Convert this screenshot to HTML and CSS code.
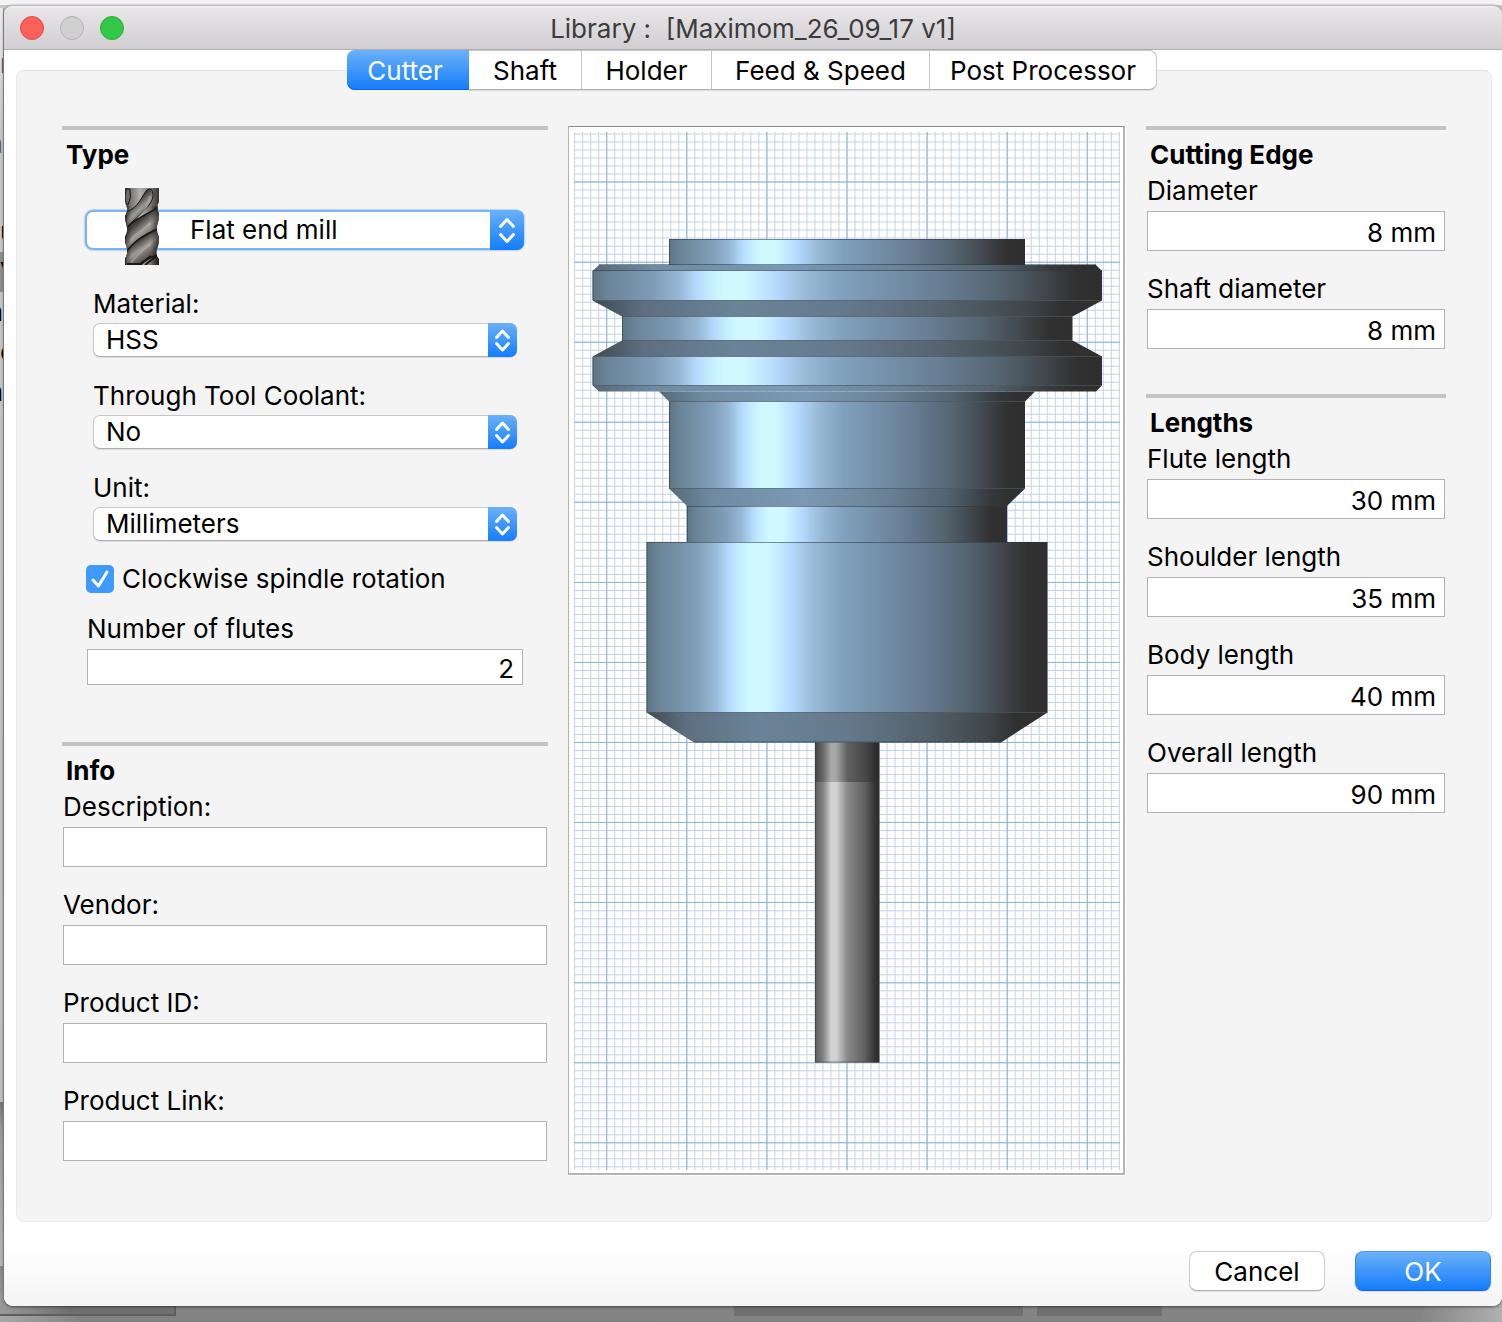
FILE: index.html
```html
<!DOCTYPE html>
<html lang="en">
<head>
<meta charset="utf-8">
<title>Library : [Maximom_26_09_17 v1]</title>
<link rel="stylesheet" href="styles.css">
</head>
<body>
<div class="backdrop" aria-hidden="true">
  <div class="strip">
    <span class="glyph steel g1">r</span>
    <span class="glyph gray tail g2">a</span>
    <span class="glyph g3">u</span>
    <span class="glyph picked g4">V</span>
    <span class="glyph tail g5">n</span>
    <span class="glyph g6">c</span>
    <span class="glyph tail g7">a</span>
  </div>
  <div class="ledge"><i class="slab slab-a"></i><i class="slab slab-b"></i><i class="slab slab-c"></i></div>
</div>

<main class="window">
  <header class="titlebar">
    <div class="lights">
      <button class="light red" type="button" aria-label="Close"></button>
      <button class="light off" type="button" aria-label="Minimize" disabled></button>
      <button class="light green" type="button" aria-label="Zoom"></button>
    </div>
    <h1 class="title">Library :&nbsp; [Maximom_26_09_17 v1]</h1>
  </header>

  <nav class="tabs">
    <button class="tab active" type="button">Cutter</button>
    <button class="tab" type="button">Shaft</button>
    <button class="tab" type="button">Holder</button>
    <button class="tab" type="button">Feed &amp; Speed</button>
    <button class="tab" type="button">Post Processor</button>
  </nav>

  <form class="form">
    <div class="panel">
      <div class="column">
        <section class="section type">
          <h2 class="heading">Type</h2>
          <div class="picker">
            <select class="select" id="tool" aria-label="Tool type"><option>Flat end mill</option></select>
            <svg class="mill" width="34" height="77" viewBox="0 0 34 77" aria-hidden="true">
              <defs>
                <linearGradient id="m" x1="0" x2="1"><stop offset="0" stop-color="#3c3a38"/><stop offset=".12" stop-color="#6e6a68"/><stop offset=".45" stop-color="#b4b0ac"/><stop offset=".75" stop-color="#7b7775"/><stop offset="1" stop-color="#37332f"/></linearGradient>
                <linearGradient id="f" x1=".2" x2=".7" y1=".1" y2=".9"><stop offset="0" stop-color="#4b4a48"/><stop offset=".3" stop-color="#3f3e3c"/><stop offset=".55" stop-color="#a09c97"/><stop offset=".75" stop-color="#6a6764"/><stop offset="1" stop-color="#343230"/></linearGradient>
                <linearGradient id="edge" x1="0" x2="1"><stop offset="0" stop-color="#141413" stop-opacity=".6"/><stop offset=".2" stop-color="#141413" stop-opacity="0"/><stop offset=".75" stop-color="#141413" stop-opacity="0"/><stop offset="1" stop-color="#141413" stop-opacity=".7"/></linearGradient>
                <clipPath id="c"><path d="M0 0H34V14Q31 19 34 26Q34 32 32 38Q31 43 34 49Q34 56 32 61Q30 67 34 71V77H0V71Q3 65 2 61Q0 55 0 49Q3 43 2 39Q0 33 0 28Q3 23 2 20Q0 16 0 12Z"/></clipPath>
              </defs>
              <g clip-path="url(#c)">
                <path fill="url(#m)" d="M0 0H34V77H0Z"/>
                <path fill="url(#f)" stroke="#191918" d="M1 24C14 20 17 7 22 2Q28-1 28 7C28 18 12 28 1 40Z"/>
                <path fill="url(#f)" stroke="#191918" stroke-width="1.500" d="M0 42C8 31 22 27 35 18V40C20 46 8 53 0 66Z"/>
                <path fill="url(#f)" stroke="#191918" stroke-width="1.500" d="M0 66C8 53 20 47 35 40V66C25 69 18 74 14 79H0Z"/>
                <path fill="none" stroke="#bdb9b4" stroke-width="1.500" d="M5 53C10 45 18 43 25 35M6 75C11 67 18 62 26 56M14 29C19 24 24 18 25 8" opacity=".5"/>
                <path fill="#6a6866" stroke="#1d1d1c" d="M1 1H5Q7 10 3 17Q0 15 0 9Z"/>
                <path fill="none" stroke="#1b1a1a" stroke-width="2" d="M2 76H15L26 68M20 77L34 66"/>
                <path fill="url(#edge)" d="M0 18H34V77H0Z"/>
              </g>
            </svg>
            <svg class="knob" viewBox="0 0 34 40" aria-hidden="true"><path d="M10.500 16.500L17 9.500L23.500 16.500M10.500 24.500L17 31.500L23.500 24.500"/></svg>
          </div>

          <div class="choices">
            <div class="choice">
              <label class="label" for="material">Material:</label>
              <div class="drop"><select class="select" id="material"><option>HSS</option></select><svg class="knob" viewBox="0 0 29 34" aria-hidden="true"><path d="M8.500 14.500L14.500 8L20.500 14.500M8.500 20.500L14.500 27L20.500 20.500"/></svg></div>
            </div>
            <div class="choice">
              <label class="label" for="coolant">Through Tool Coolant:</label>
              <div class="drop"><select class="select" id="coolant"><option>No</option></select><svg class="knob" viewBox="0 0 29 34" aria-hidden="true"><path d="M8.500 14.500L14.500 8L20.500 14.500M8.500 20.500L14.500 27L20.500 20.500"/></svg></div>
            </div>
            <div class="choice">
              <label class="label" for="unit">Unit:</label>
              <div class="drop"><select class="select" id="unit"><option>Millimeters</option></select><svg class="knob" viewBox="0 0 29 34" aria-hidden="true"><path d="M8.500 14.500L14.500 8L20.500 14.500M8.500 20.500L14.500 27L20.500 20.500"/></svg></div>
            </div>
          </div>

          <div class="flutes">
            <label class="check"><input class="box" type="checkbox" checked><svg class="tick" viewBox="0 0 28 28" aria-hidden="true"><path d="M7 15L12.500 21L21 7"/></svg><span>Clockwise spindle rotation</span></label>
            <label class="label" for="flutes">Number of flutes</label>
            <input class="input short" id="flutes" type="text" value="2">
          </div>
        </section>

        <section class="section">
          <h2 class="heading">Info</h2>
          <div class="fields">
            <div class="field"><label class="label" for="description">Description:</label><input class="input" id="description" type="text"></div>
            <div class="field"><label class="label" for="vendor">Vendor:</label><input class="input" id="vendor" type="text"></div>
            <div class="field"><label class="label" for="pid">Product ID:</label><input class="input" id="pid" type="text"></div>
            <div class="field"><label class="label" for="link">Product Link:</label><input class="input" id="link" type="text"></div>
          </div>
        </section>
      </div>

      <figure class="preview">
        <svg class="drawing" viewBox="574 132 546 1038" role="img" aria-label="Tool and holder profile">
          <defs>
            <linearGradient id="steel" x1="0" x2="1">
              <stop offset="0" stop-color="#5e7484"/><stop offset=".03" stop-color="#6b8498"/><stop offset=".12" stop-color="#7e9db7"/><stop offset=".17" stop-color="#97b8d6"/><stop offset=".205" stop-color="#b5daff"/><stop offset=".235" stop-color="#c6effe"/><stop offset=".26" stop-color="#d0f9ff"/><stop offset=".3" stop-color="#cff8ff"/><stop offset=".33" stop-color="#c3e9ff"/><stop offset=".36" stop-color="#b5daff"/><stop offset=".42" stop-color="#98b9d6"/><stop offset=".49" stop-color="#80a1bd"/><stop offset=".56" stop-color="#7794ad"/><stop offset=".68" stop-color="#687e95"/><stop offset=".8" stop-color="#546470"/><stop offset=".88" stop-color="#43494f"/><stop offset=".95" stop-color="#303030"/><stop offset="1" stop-color="#2f2f2f"/>
            </linearGradient>
            <linearGradient id="under" x1="0" x2="1">
              <stop offset="0" stop-color="#404a52"/><stop offset=".1" stop-color="#5d6f80"/><stop offset=".28" stop-color="#6b8398"/><stop offset=".5" stop-color="#65798c"/><stop offset=".7" stop-color="#53616b"/><stop offset=".85" stop-color="#40464a"/><stop offset=".92" stop-color="#303030"/><stop offset="1" stop-color="#2f2f2f"/>
            </linearGradient>
            <linearGradient id="bevel" x1="0" x2="1">
              <stop offset="0" stop-color="#566877"/><stop offset=".12" stop-color="#6f8ba2"/><stop offset=".38" stop-color="#7a99b3"/><stop offset=".6" stop-color="#6b8398"/><stop offset=".78" stop-color="#536370"/><stop offset=".9" stop-color="#363a3d"/><stop offset=".95" stop-color="#303030"/><stop offset="1" stop-color="#2f2f2f"/>
            </linearGradient>
            <linearGradient id="shank" x1="0" x2="1">
              <stop offset="0" stop-color="#5c5c5c"/><stop offset=".13" stop-color="#858585"/><stop offset=".25" stop-color="#d2d2d2"/><stop offset=".33" stop-color="#d2d2d2"/><stop offset=".5" stop-color="#8a8a8a"/><stop offset=".78" stop-color="#5e5e5e"/><stop offset=".93" stop-color="#323232"/><stop offset="1" stop-color="#2c2c2c"/>
            </linearGradient>
            <linearGradient id="shade" x1="0" x2="1">
              <stop offset="0" stop-color="#444"/><stop offset=".13" stop-color="#6a6a6a"/><stop offset=".25" stop-color="#a8a8a8"/><stop offset=".32" stop-color="#a8a8a8"/><stop offset=".5" stop-color="#616161"/><stop offset=".8" stop-color="#444"/><stop offset=".93" stop-color="#303030"/><stop offset="1" stop-color="#2b2b2b"/>
            </linearGradient>
          </defs>
          <g class="grid">
            <path class="minor" stroke-width="1038" stroke-dasharray="1 7.010" d="M566.150 651H1120"/>
            <path class="minor" stroke-width="546" stroke-dasharray="1 7.006" d="M847 125.540V1170"/>
            <path class="major" stroke-width="1038" stroke-dasharray="1 79.100" d="M526.100 651H1120"/>
            <path class="major" stroke-width="546" stroke-dasharray="1 79.060" d="M847 101.520V1170"/>
          </g>
          <path fill="url(#shade)" d="M815 742H879.500V782H815Z"/>
          <path fill="url(#shank)" d="M815 782H879.500V1062.500H815Z"/>
          <path fill="url(#steel)" d="M669 239H1025V265H669Z"/>
          <path fill="url(#bevel)" d="M599 265H1096L1102 271H592.500Z"/>
          <path fill="url(#steel)" d="M592.500 270.500H1102V300.500H592.500Z"/>
          <path fill="url(#under)" d="M592.500 300.500H1102L1072.500 316.500H622Z"/>
          <path fill="url(#steel)" d="M622 316.500H1072.500V340.500H622Z"/>
          <path fill="url(#under)" d="M622 340.500H1072.500L1102 356.500H592.500Z"/>
          <path fill="url(#steel)" d="M592.500 356.500H1102V385.500H592.500Z"/>
          <path fill="url(#bevel)" d="M592.500 385.500H1102L1096 391.500H599Z"/>
          <path fill="url(#bevel)" d="M659 391.500H1035L1025 401.500H669Z"/>
          <path fill="url(#steel)" d="M669 401.500H1025V488.500H669Z"/>
          <path fill="url(#bevel)" d="M669 488.500H1025L1007 506H687Z"/>
          <path fill="url(#steel)" d="M687 506H1007V542H687Z"/>
          <path fill="url(#steel)" d="M646.500 542H1047.500V712.500H646.500Z"/>
          <path fill="url(#under)" d="M646.500 712.500H1047.500L1001 742.500H694Z"/>
          <path class="seam" d="M669 239.500H1025M599 264.500H1096M593 270.500H1102M593 300.500H1102M622 316.500H1072M622 340.500H1072M593 356.500H1102M593 385.500H1102M669 401.500H1025M669 488.500H1025M687 506.500H1007M646.500 542.500H1047.500M646.500 712.500H1047.500M694 742H1001M815 1062H879M669.500 239V265M593 271V300M622.500 317V340M593 357V385M669.500 402V488M687.500 506V542M647 543V712M815.500 742V1062"/>
        </svg>
      </figure>

      <div class="column side">
        <section class="section">
          <h2 class="heading">Cutting Edge</h2>
          <div class="fields">
            <div class="field"><label class="label" for="dia">Diameter</label><input class="input" id="dia" type="text" value="8 mm"></div>
            <div class="field"><label class="label" for="sdia">Shaft diameter</label><input class="input" id="sdia" type="text" value="8 mm"></div>
          </div>
        </section>
        <section class="section">
          <h2 class="heading">Lengths</h2>
          <div class="fields">
            <div class="field"><label class="label" for="fl">Flute length</label><input class="input" id="fl" type="text" value="30 mm"></div>
            <div class="field"><label class="label" for="sl">Shoulder length</label><input class="input" id="sl" type="text" value="35 mm"></div>
            <div class="field"><label class="label" for="bl">Body length</label><input class="input" id="bl" type="text" value="40 mm"></div>
            <div class="field"><label class="label" for="ol">Overall length</label><input class="input" id="ol" type="text" value="90 mm"></div>
          </div>
        </section>
      </div>
    </div>

    <footer class="actions">
      <button class="button" type="button">Cancel</button>
      <button class="button primary" type="submit">OK</button>
    </footer>
  </form>
</main>
</body>
</html>
```
FILE: styles.css
```css
* { box-sizing: border-box; }

body {
  position: relative;
  min-height: 100vh;
  margin: 0;
  padding: 5px 0 16px 4px;
  background: linear-gradient(#f3f3f3 5px, #c8c8c8 5px, #c0c0c0);
  color: #000;
  font: 26px/30px Inter, "Liberation Sans", sans-serif;
  overflow-x: hidden;
}

button, input, select { font: inherit; color: inherit; margin: 0; }

/* Application window behind the dialog */
.backdrop { position: absolute; inset: 0; overflow: hidden; }
.strip {
  position: absolute;
  left: 0; top: 8px; bottom: 0;
  width: 4px;
  overflow: hidden;
  border-right: 1px solid #999;
  background: linear-gradient(#ececec, #c6c6c6 120px, #bdbdbd 1094px, #777 1094px, #999 1120px, #b5b5b5 1258px, #888 1258px, #a0a0a0);
}
.glyph { position: absolute; left: 0; line-height: 40px; }
.tail { left: auto; right: 0; }
.steel { color: #4c5870; }
.gray { color: #666; }
.picked { background: #8e8e8e; }
.g1 { top: 36px; }
.g2 { top: 116px; }
.g3 { top: 204px; }
.g4 { top: 244px; }
.g5 { top: 284px; }
.g6 { top: 324px; }
.g7 { top: 364px; }
.ledge {
  position: absolute;
  left: 0; right: 0; bottom: 0;
  height: 30px;
  background: linear-gradient(90deg, #a8a8a8, #838383 80px, #848484 1420px, #b0b0b0);
}
.slab { position: absolute; bottom: 6px; height: 24px; background: #707070; }
.slab-a { left: 0; width: 176px; border: solid #5e5e5e; border-width: 0 2px 2px 0; background: linear-gradient(90deg, #999, #707070 70px); }
.slab-b { left: 734px; width: 289px; }
.slab-c { left: 1037px; width: 125px; }

/* Dialog */
.window {
  position: relative;
  border-radius: 9px;
  background: #fff;
  box-shadow: 0 0 1px #555, 0 1px 3px rgba(0, 0, 0, .5);
}
.titlebar {
  position: relative;
  display: flex;
  align-items: center;
  justify-content: center;
  height: 45px;
  border-top: 1px solid #bdbdbd;
  border-bottom: 1px solid #aeacae;
  border-radius: 9px 9px 0 0;
  background: linear-gradient(#f4f3f4, #e8e6e9 2px, #d0ced1);
}
.lights { position: absolute; left: 16px; top: 10px; display: flex; gap: 16px; }
.light { width: 24px; height: 24px; padding: 0; border: 1px solid; border-radius: 50%; }
.red { background: #fc605b; border-color: #e04a46; }
.off { background: #d0d0d0; border-color: #b4b3b4; }
.green { background: #34c84a; border-color: #2aac3c; }
.title { margin: 0; padding-top: 2px; color: #3c3c3c; font-size: 26px; font-weight: 400; line-height: 30px; }

.tabs {
  position: relative;
  display: grid;
  grid-template-columns: 122px 113px 130px 218px 227px;
  justify-content: center;
  height: 40px;
  margin: 0 2px -20px 0;
}
.tab {
  padding: 2px 0 0;
  border: solid #c8c8c8;
  border-width: 1px 1px 1px 0;
  border-bottom-color: #b2b2b2;
  background: #fff;
  white-space: nowrap;
  box-shadow: 0 1px 1px rgba(0, 0, 0, .1);
}
.tab:last-child { border-radius: 0 8px 8px 0; }
.active {
  padding-right: 6px;
  border: 0;
  border-radius: 8px 0 0 8px;
  background: linear-gradient(#6bb1f8, #147dfc);
  box-shadow: inset 0 -1px #0d63ef;
  color: #fff;
}

.form { padding: 0 10px 15px 12px; border-radius: 0 0 9px 9px; background: linear-gradient(#fff calc(100% - 60px), #f4f4f4); }
.panel {
  display: grid;
  grid-template-columns: 486px minmax(0, 1fr) 300px;
  column-gap: 20px;
  align-items: start;
  padding: 55px 45px 46px;
  border: 1px solid #ebebeb;
  border-top-color: #e2e2e2;
  border-radius: 8px;
  background: #f4f4f4;
}

.section { border-top: 4px solid #c4c4c4; padding-top: 10px; }
.section + .section { margin-top: 45px; }
.type + .section { margin-top: 57px; }
.heading { margin: 0 0 6px 4px; font-size: 26px; line-height: 30px; font-weight: 700; }
.label { display: block; }

.fields { display: grid; gap: 23px; padding: 0 1px; }
.field { display: grid; gap: 5px; }
.input {
  width: 100%;
  height: 40px;
  padding: 2px 8px 0;
  border: 1px solid #b3b3b3;
  border-radius: 0;
  background: #fff;
  outline: 0;
  text-align: right;
}
.short { height: 36px; margin-top: 5px; }

.picker { position: relative; margin: 40px 24px 0 23px; }
.select {
  display: block;
  width: 100%;
  height: 34px;
  padding: 0 40px 0 12px;
  border: 1px solid #c6c6c6;
  border-bottom-color: #acacac;
  border-radius: 7px;
  appearance: none;
  background: #fff;
  outline: 0;
  box-shadow: 0 1px 1px rgba(0, 0, 0, .1);
}
.picker .select { height: 40px; padding-left: 103px; border: 2px solid #7fb3ee; border-radius: 8px; box-shadow: 0 0 1px 1px #b8d5f6; }
.mill { position: absolute; left: 40px; top: -22px; }
.knob {
  position: absolute;
  top: 0; right: 0;
  width: 29px;
  height: 34px;
  border-radius: 0 7px 7px 0;
  background: linear-gradient(#6bb1f8, #147dfc);
  pointer-events: none;
}
.picker .knob { width: 34px; height: 40px; }
.knob path, .tick path { fill: none; stroke: #fff; stroke-width: 3; stroke-linecap: round; stroke-linejoin: round; }

.choices { display: grid; gap: 24px; margin: 39px 31px 23px; }
.choice { display: grid; gap: 4px; }
.drop { position: relative; }

.flutes { margin: 0 25px; }
.check { position: relative; display: flex; align-items: center; gap: 8px; margin: 0 0 20px -1px; }
.box { width: 28px; height: 28px; border-radius: 5px; appearance: none; background: #409afb; }
.tick { position: absolute; left: 0; top: 1px; width: 28px; height: 28px; pointer-events: none; }

/* Tool preview */
.preview {
  margin: 0 1px 0 0;
  padding: 5px 3px 3px 5px;
  border: solid #b4b4b4;
  border-width: 1px 2px 2px 1px;
  border-top-color: #8c8c8c;
  background: #fff;
  box-shadow: 1px 1px #fff;
}
.drawing { display: block; width: 100%; height: auto; }
.minor { stroke: #c3d3e6; }
.major { stroke: #8fb3cf; }
.seam { fill: none; stroke: #2b3640; stroke-opacity: .55; }

.actions { display: flex; justify-content: flex-end; gap: 30px; padding: 29px 1px 0 0; }
.button {
  width: 136px;
  height: 40px;
  padding: 1px 0 0;
  border: 1px solid #cdcdcd;
  border-bottom-color: #b2b2b2;
  border-radius: 8px;
  background: #fff;
  box-shadow: 0 1px 1px rgba(0, 0, 0, .1);
}
.primary { border-color: #4a9df5 #2f88f5 #0d63ef; background: linear-gradient(#6bb1f8, #147dfc); color: #fff; }
```
